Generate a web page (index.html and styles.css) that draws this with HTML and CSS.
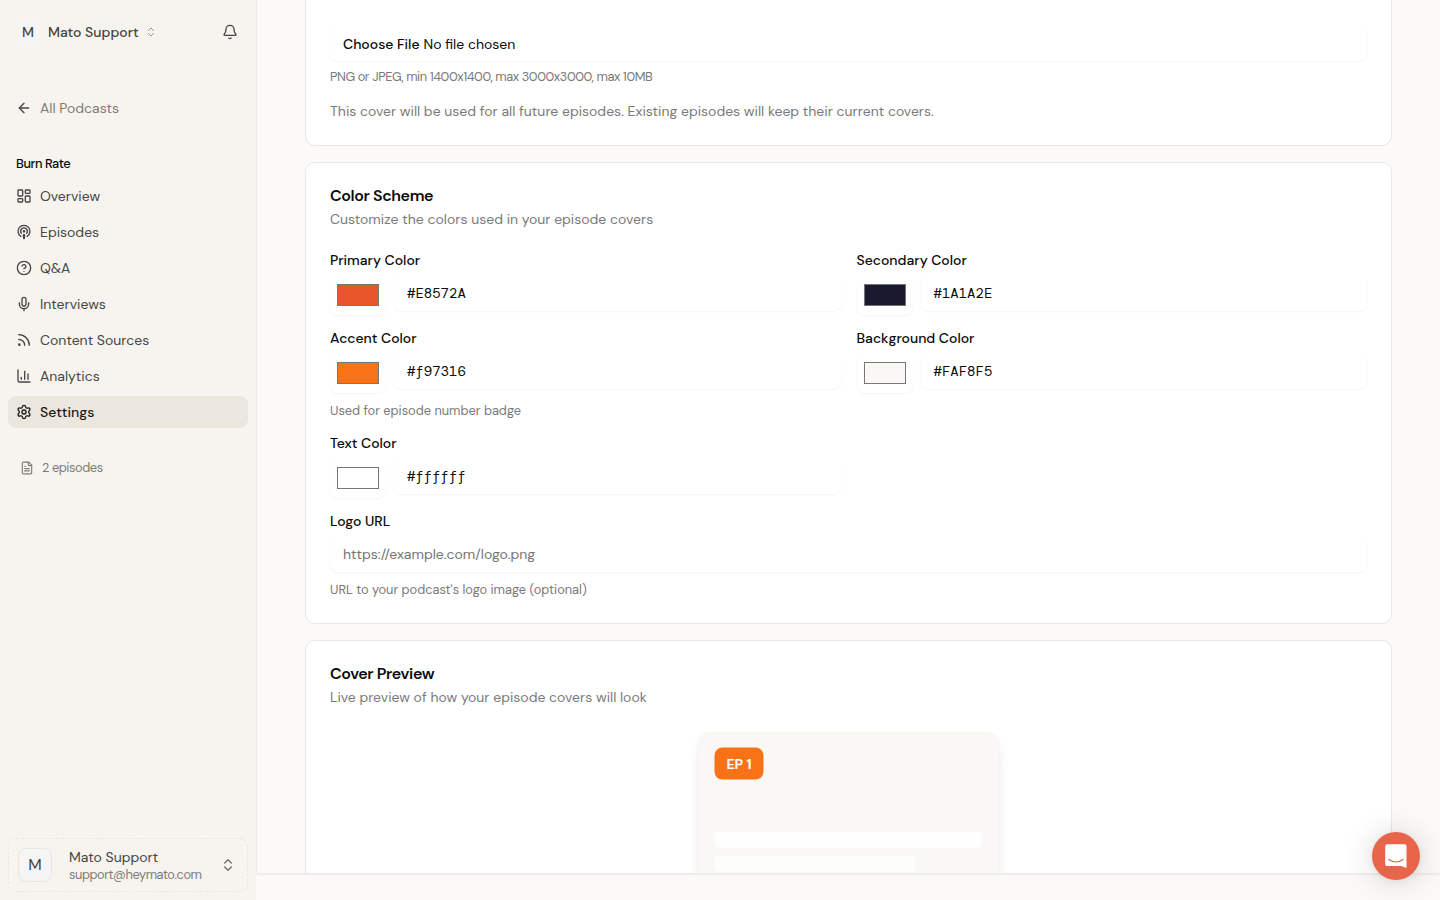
FILE: index.html
```html
<!DOCTYPE html>
<html lang="en">
<head>
<meta charset="utf-8">
<title>Burn Rate – Settings</title>
<link rel="stylesheet" href="styles.css">
</head>
<body>
<div class="app">
  <aside class="sidebar">
    <div class="workspace">
      <span class="workspace-avatar">M</span>
      <span class="workspace-name">Mato Support</span>
      <svg class="icon workspace-chevrons" viewBox="0 0 24 24"><path d="m7 15 5 5 5-5"/><path d="m7 9 5-5 5 5"/></svg>
      <svg class="icon bell" viewBox="0 0 24 24"><path d="M10.268 21a2 2 0 0 0 3.464 0"/><path d="M3.262 15.326A1 1 0 0 0 4 17h16a1 1 0 0 0 .74-1.673C19.41 13.956 18 12.499 18 8A6 6 0 0 0 6 8c0 4.499-1.411 5.956-2.738 7.326"/></svg>
    </div>
    <a class="nav-item back"><svg class="icon" viewBox="0 0 24 24"><path d="m12 19-7-7 7-7"/><path d="M19 12H5"/></svg><span>All Podcasts</span></a>
    <div class="group-label"><span>Burn Rate</span></div>
    <nav class="nav">
      <a class="nav-item"><svg class="icon" viewBox="0 0 24 24"><rect width="7" height="9" x="3" y="3" rx="1"/><rect width="7" height="5" x="14" y="3" rx="1"/><rect width="7" height="9" x="14" y="12" rx="1"/><rect width="7" height="5" x="3" y="16" rx="1"/></svg><span>Overview</span></a>
      <a class="nav-item"><svg class="icon" viewBox="0 0 24 24"><path d="M16.85 18.58a9 9 0 1 0-9.7 0"/><path d="M8 14a5 5 0 1 1 8 0"/><circle cx="12" cy="11" r="1"/><path d="M13 17a1 1 0 1 0-2 0l.5 4.5a.5.5 0 1 0 1 0Z"/></svg><span>Episodes</span></a>
      <a class="nav-item"><svg class="icon" viewBox="0 0 24 24"><circle cx="12" cy="12" r="10"/><path d="M9.09 9a3 3 0 0 1 5.83 1c0 2-3 3-3 3"/><path d="M12 17h.01"/></svg><span>Q&amp;A</span></a>
      <a class="nav-item"><svg class="icon" viewBox="0 0 24 24"><path d="M12 19v3"/><path d="M19 10v2a7 7 0 0 1-14 0v-2"/><rect x="9" y="2" width="6" height="13" rx="3"/></svg><span>Interviews</span></a>
      <a class="nav-item"><svg class="icon" viewBox="0 0 24 24"><path d="M4 11a9 9 0 0 1 9 9"/><path d="M4 4a16 16 0 0 1 16 16"/><circle cx="5" cy="19" r="1"/></svg><span>Content Sources</span></a>
      <a class="nav-item"><svg class="icon" viewBox="0 0 24 24"><path d="M3 3v16a2 2 0 0 0 2 2h16"/><path d="M18 17V9"/><path d="M13 17V5"/><path d="M8 17v-3"/></svg><span>Analytics</span></a>
      <a class="nav-item active"><svg class="icon" viewBox="0 0 24 24"><path d="M9.671 4.136a2.34 2.34 0 0 1 4.659 0 2.34 2.34 0 0 0 3.319 1.915 2.34 2.34 0 0 1 2.33 4.033 2.34 2.34 0 0 0 0 3.831 2.34 2.34 0 0 1-2.33 4.033 2.34 2.34 0 0 0-3.319 1.915 2.34 2.34 0 0 1-4.659 0 2.34 2.34 0 0 0-3.32-1.915 2.34 2.34 0 0 1-2.33-4.033 2.34 2.34 0 0 0 0-3.831A2.34 2.34 0 0 1 6.35 6.051a2.34 2.34 0 0 0 3.319-1.915"/><circle cx="12" cy="12" r="3"/></svg><span>Settings</span></a>
    </nav>
    <div class="episode-count"><svg class="icon" viewBox="0 0 24 24"><path d="M15 2H6a2 2 0 0 0-2 2v16a2 2 0 0 0 2 2h12a2 2 0 0 0 2-2V7Z"/><path d="M14 2v4a2 2 0 0 0 2 2h4"/><path d="M10 9H8"/><path d="M16 13H8"/><path d="M16 17H8"/></svg><span>2 episodes</span></div>
    <div class="account">
      <span class="account-avatar">M</span>
      <div class="account-text">
        <div class="account-name">Mato Support</div>
        <div class="account-mail">support@heymato.com</div>
      </div>
      <svg class="icon account-chevrons" viewBox="0 0 24 24"><path d="m7 15 5 5 5-5"/><path d="m7 9 5-5 5 5"/></svg>
    </div>
  </aside>

  <main class="main">
    <section class="card card-upload">
      <div class="input"><b class="choose">Choose File</b><span class="no-file">No file chosen</span></div>
      <p class="hint hint-file">PNG or JPEG, min 1400x1400, max 3000x3000, max 10MB</p>
      <p class="note">This cover will be used for all future episodes. Existing episodes will keep their current covers.</p>
    </section>

    <section class="card">
      <h2 class="title">Color Scheme</h2>
      <p class="desc">Customize the colors used in your episode covers</p>
      <div class="color-grid">
        <div class="field">
          <label class="label">Primary Color</label>
          <div class="color-row"><div class="picker"><div class="swatch primary"></div></div><div class="input mono">#E8572A</div></div>
        </div>
        <div class="field">
          <label class="label">Secondary Color</label>
          <div class="color-row"><div class="picker"><div class="swatch secondary"></div></div><div class="input mono">#1A1A2E</div></div>
        </div>
        <div class="field">
          <label class="label">Accent Color</label>
          <div class="color-row"><div class="picker"><div class="swatch accent"></div></div><div class="input mono">#f97316</div></div>
          <p class="hint hint-field">Used for episode number badge</p>
        </div>
        <div class="field">
          <label class="label">Background Color</label>
          <div class="color-row"><div class="picker"><div class="swatch background"></div></div><div class="input mono">#FAF8F5</div></div>
        </div>
        <div class="field">
          <label class="label">Text Color</label>
          <div class="color-row"><div class="picker"><div class="swatch text"></div></div><div class="input mono">#ffffff</div></div>
        </div>
      </div>
      <div class="field">
        <label class="label">Logo URL</label>
        <div class="input placeholder">https://example.com/logo.png</div>
        <p class="hint hint-field">URL to your podcast's logo image (optional)</p>
      </div>
    </section>

    <section class="card card-preview">
      <h2 class="title">Cover Preview</h2>
      <p class="desc">Live preview of how your episode covers will look</p>
      <div class="cover">
        <span class="badge">EP 1</span>
        <div class="bar"></div>
        <div class="bar short"></div>
      </div>
    </section>
  </main>

  <div class="chat">
    <svg viewBox="0 0 24 24"><path class="bubble" d="M3.200 .2H20.500A2 2 0 0 1 22.500 2.200V24L17 22H3.200A2 2 0 0 1 1.200 20V2.200A2 2 0 0 1 3.200 .2Z"/><path class="smile" d="M4.700 15.600Q12 20.400 19.200 15.600"/></svg>
  </div>
</div>
</body>
</html>
```
FILE: styles.css
```css
* { box-sizing: border-box; }
body { margin: 0; font-family: "DM Sans", Inter, "Liberation Sans", sans-serif; font-size: 14px; line-height: 20px; color: #0a0a0a; background: #fbfaf8; }
h2, p { margin: 0; }
.app { width: 1440px; height: 900px; display: flex; align-items: flex-start; overflow: hidden; }
.icon { width: 16px; height: 16px; flex: none; fill: none; stroke: currentColor; stroke-width: 2; stroke-linecap: round; stroke-linejoin: round; }

.sidebar { width: 256px; height: 900px; flex: none; display: flex; flex-direction: column; padding: 16px 8px 8px; background: #f7f4ef; color: #454545; position: relative; z-index: 1; }
.workspace { display: flex; align-items: center; height: 32px; padding: 0 10px 0 8px; }
.workspace-avatar { width: 24px; height: 24px; border-radius: 4px; background: #f5f5f5; display: grid; place-items: center; font-weight: 500; }
.workspace-name { margin-left: 8px; font-weight: 500; }
.workspace-chevrons { width: 12px; height: 12px; margin-left: 6px; opacity: .55; }
.bell { margin-left: auto; }
.nav-item { display: flex; align-items: center; gap: 8px; height: 32px; padding: 0 8px; border-radius: 8px; }
.back { margin-top: 44px; }
.back span { color: #7d7c79; }
.group-label { height: 32px; margin-top: 24px; padding: 0 8px; display: flex; align-items: center; font-size: 12.8px; letter-spacing: -.42px; font-weight: 500; color: #0a0a0a; }
.nav { display: flex; flex-direction: column; gap: 4px; }
.active { background: #ebe7df; color: #1a1a1a; font-weight: 500; }
.episode-count { display: flex; align-items: center; gap: 8px; height: 16px; margin-top: 32px; padding: 0 12px; font-size: 12.8px; letter-spacing: -.42px; color: #7d7c79; }
.episode-count .icon { width: 14px; height: 14px; }
.account { height: 54px; margin-top: auto; padding: 0 11px 0 9px; display: flex; align-items: center; border: 1px dashed #ebe7df; border-radius: 8px; }
.account-avatar { width: 34px; height: 34px; border: 1px solid #ebe7df; border-radius: 8px; background: #f5f5f5; display: grid; place-items: center; font-size: 16px; }
.account-text { margin-left: 17px; padding-top: 2px; flex: 1; line-height: 17px; }
.account-mail { font-size: 12.8px; letter-spacing: -.44px; line-height: 18px; color: #7d7c79; }
.account-chevrons { opacity: .75; }

.main { width: 1184px; height: 873px; overflow: hidden; padding: 0 48px; background: #fbfaf8; border-left: 1px solid #ebe7e1; box-shadow: 0 1px 3px rgba(0,0,0,.1); display: flex; flex-direction: column; gap: 16px; }
.card { flex: none; background: #fff; border: 1px solid #ebe7e1; border-radius: 10px; padding: 24px; }
.card-upload { height: 146px; border-top: 0; border-radius: 0 0 10px 10px; padding-top: 26px; }
.input { height: 36px; flex: 1; display: flex; align-items: center; padding: 0 13px; border-radius: 8px; box-shadow: 0 1px 2px rgba(0,0,0,.05); background: #fff; }
.card-upload .input { height: 35px; padding-top: 1px; }
.choose { font-weight: 500; margin-right: 4px; }
.hint { font-size: 12.8px; line-height: 19px; color: #7a7a7a; }
.hint-file { margin-top: 6px; letter-spacing: -.42px; }
.hint-field { margin-top: 8px; line-height: 19.2px; }
.note { margin-top: 15px; color: #7a7a7a; }
.title { font-size: 16px; line-height: 16px; font-weight: 600; letter-spacing: -.4px; padding-top: 1px; }
.desc { margin-top: 5px; margin-bottom: 24px; color: #7a7a7a; }
.color-grid { display: grid; grid-template-columns: 1fr 1fr; gap: 16px; margin-bottom: 16px; align-items: start; }
.label { display: block; font-weight: 500; line-height: 14px; margin-bottom: 8px; }
.color-row { display: flex; align-items: flex-start; gap: 8px; }
.picker { width: 56px; height: 40px; padding: 9px 7px; border-radius: 8px; box-shadow: 0 1px 2px rgba(0,0,0,.05); }
.swatch { height: 22px; border: 1px solid #767676; }
.primary { background: #e8572a; }
.secondary { background: #1a1a2e; }
.accent { background: #f97316; }
.background { background: #faf8f5; }
.text { background: #fff; }
.mono { font-family: "DM Mono", "Liberation Mono", monospace; }
.placeholder { flex: none; color: #757575; }
.cover { width: 300px; height: 300px; margin: 0 0 0 368px; padding: 16px; border-radius: 10px; background: #faf8f5; box-shadow: 0 10px 15px -3px rgba(0,0,0,.1), 0 4px 6px -4px rgba(0,0,0,.1); transform: translate(.5px, .5px); }
.badge { display: grid; place-items: center; width: 49px; height: 32px; margin-bottom: 52px; border-radius: 8px; background: #f97316; color: #fff; font-weight: 700; }
.bar { height: 16px; border-radius: 4px; background: #fefefe; margin-bottom: 8px; }
.short { width: 75%; background: #fdfdfb; }

.chat { position: absolute; z-index: 2; left: 1372px; top: 832px; width: 48px; height: 48px; border-radius: 50%; background: #e8654a; box-shadow: 0 1px 6px rgba(0,0,0,.06), 0 2px 32px rgba(0,0,0,.16); display: grid; place-items: center; }
.chat svg { width: 24px; height: 24px; }
.bubble { fill: #fff; }
.smile { fill: none; stroke: #e8654a; stroke-width: 1.2; stroke-linecap: round; }
```
